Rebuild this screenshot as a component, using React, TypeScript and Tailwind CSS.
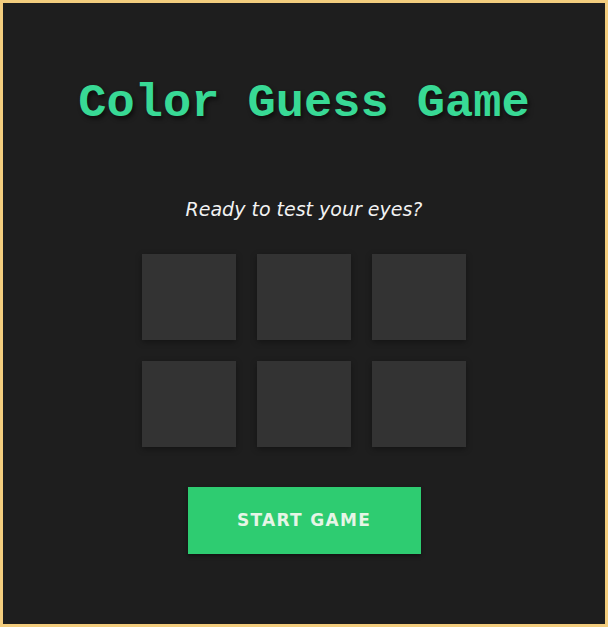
import React from 'react'

const tiles = [0, 1, 2, 3, 4, 5]

const App: React.FC = () => {
  return (
    <div className="w-[608px] h-[627px] border-[3px] border-[#f3cd7e] bg-[#1e1e1e] flex flex-col items-center">
      <h1
        className="mt-[78px] text-[47px] leading-[46px] text-[#38d995] font-bold"
        style={{ fontFamily: '"Liberation Mono", "Courier New", monospace', textShadow: '2px 3px 4px rgba(0,0,0,0.55)' }}
      >
        Color Guess Game
      </h1>

      <p
        className="mt-[70px] text-[19px] leading-6 italic text-[#f2f2f2]"
        style={{ fontFamily: '"DejaVu Sans", Verdana, sans-serif' }}
      >
        Ready to test your eyes?
      </p>

      <div className="mt-[33px] grid grid-cols-3 gap-x-[21px] gap-y-[21px]">
        {tiles.map((t) => (
          <div
            key={t}
            className="w-[94px] h-[86px] bg-[#333333] shadow-[0_2px_6px_rgba(0,0,0,0.35)]"
          />
        ))}
      </div>

      <button
        className="mt-[40px] w-[233px] h-[67px] bg-[#2ecc71] text-[#e6f5e6] text-[17px] font-bold tracking-[1.3px] shadow-[0_2px_4px_rgba(0,0,0,0.4)]"
        style={{ fontFamily: '"DejaVu Sans", Verdana, sans-serif' }}
      >
        START GAME
      </button>
    </div>
  )
}

export default App
